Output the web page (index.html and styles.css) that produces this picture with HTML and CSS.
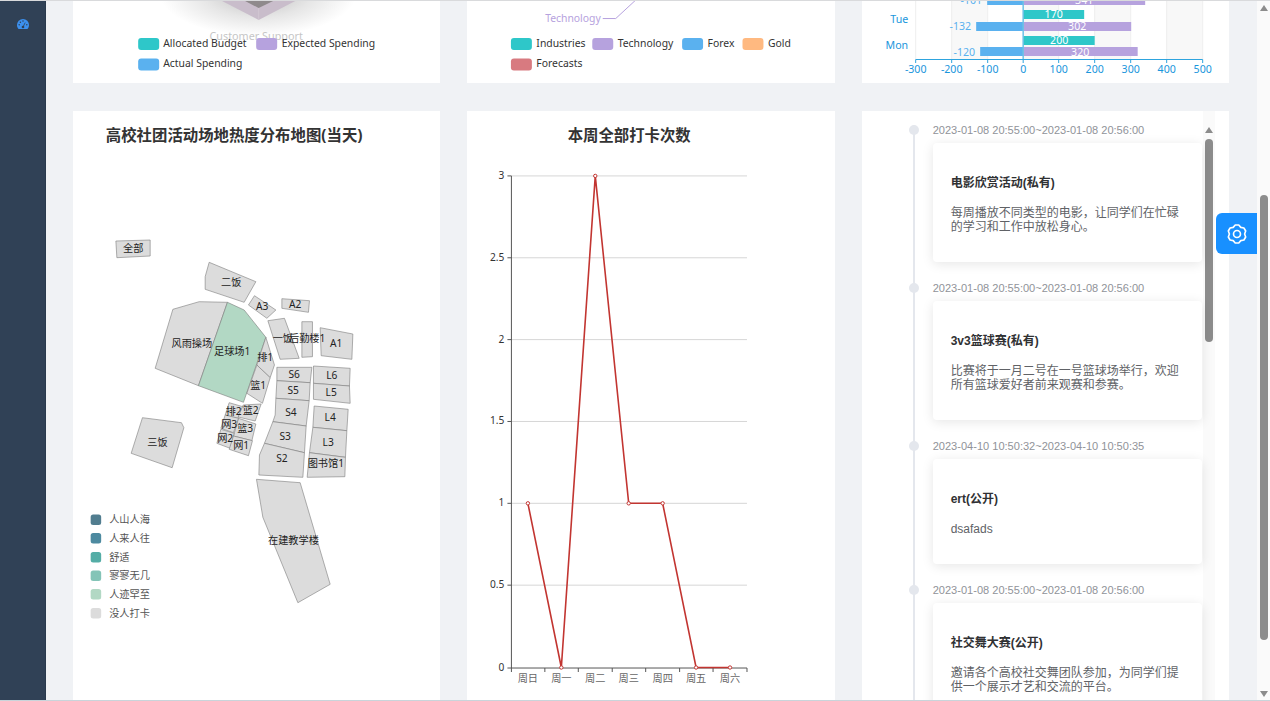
FILE: index.html
```html
<!DOCTYPE html>
<html lang="zh-CN">
<head>
    <meta charset="UTF-8">
    <title>高校社团活动</title>
    <link rel="stylesheet" href="styles.css">
</head>
<body>

<aside class="sidebar">
    <svg class="sidebar-icon" viewBox="0 0 12 10" width="12" height="10">
        <path class="gauge-body" d="M1.6 10C.6 9 0 7.6 0 6a6 6 0 0 1 12 0c0 1.6-.6 3-1.6 4z"/>
        <circle class="gauge-mark" cx="2.2" cy="5.8" r=".75"/>
        <circle class="gauge-mark" cx="3.4" cy="3.2" r=".75"/>
        <circle class="gauge-mark" cx="6" cy="2" r=".75"/>
        <circle class="gauge-mark" cx="9.8" cy="5.8" r=".75"/>
        <path class="gauge-needle" d="M6 8L8.2 3.6"/>
        <circle class="gauge-mark" cx="6" cy="8" r="1.3"/>
    </svg>
</aside>

<main class="content">
    <div class="dash-grid">

        <section class="card">
            <svg class="chart" viewBox="73 1 367 82">
                <defs>
                    <radialGradient id="funnelShade">
                        <stop offset="0" stop-color="#bdbdbd"/>
                        <stop offset=".55" stop-color="#e6e6e6"/>
                        <stop offset="1" stop-color="#fff"/>
                    </radialGradient>
                </defs>
                <ellipse cx="258" cy="-6" rx="98" ry="42" fill="url(#funnelShade)"/>
                <polygon points="220,0 258.5,20 297,0" fill="#c9bdcb"/>
                <polygon points="243,0 258.5,8 275,0" fill="#8f8a8c"/>
                <path class="funnel-edge" d="M258.5 8V20"/>
                <text class="funnel-label" x="256" y="35.500" text-anchor="middle">Customer Support</text>

                <rect class="swatch teal" x="138" y="38" width="21" height="12" rx="3"/>
                <text class="legend-text" x="163" y="43">Allocated Budget</text>
                <rect class="swatch purple" x="256" y="38" width="21" height="12" rx="3"/>
                <text class="legend-text" x="281.5" y="43">Expected Spending</text>
                <rect class="swatch blue" x="138" y="58.5" width="21" height="12" rx="3"/>
                <text class="legend-text" x="163" y="63">Actual Spending</text>
            </svg>
        </section>

        <section class="card">
            <svg class="chart" viewBox="467 1 368 82">
                <text class="pie-label" x="601" y="17.500" text-anchor="end">Technology</text>
                <path class="pie-line" d="M603 18.500H616L636 0"/>

                <rect class="swatch teal" x="511" y="38" width="21" height="12" rx="3"/>
                <text class="legend-text" x="536.500" y="43">Industries</text>
                <rect class="swatch purple" x="592.500" y="38" width="21" height="12" rx="3"/>
                <text class="legend-text" x="618" y="43">Technology</text>
                <rect class="swatch blue" x="682.500" y="38" width="21" height="12" rx="3"/>
                <text class="legend-text" x="708" y="43">Forex</text>
                <rect class="swatch orange" x="743" y="38" width="21" height="12" rx="3"/>
                <text class="legend-text" x="768.500" y="43">Gold</text>
                <rect class="swatch red" x="511" y="58.500" width="21" height="12" rx="3"/>
                <text class="legend-text" x="536.500" y="63">Forecasts</text>
            </svg>
        </section>

        <section class="card">
            <svg class="chart" viewBox="862 1 367 82">
                <rect class="stripe" x="951" y="0" width="36" height="59"/>
                <rect class="stripe" x="1023" y="0" width="36" height="59"/>
                <rect class="stripe" x="1094" y="0" width="36" height="59"/>
                <rect class="stripe" x="1166" y="0" width="36" height="59"/>
                <path class="grid-line" d="M915.500 0V59M951.500 0V59M987.500 0V59M1058.500 0V59M1094.500 0V59M1130.500 0V59M1166.500 0V59M1202.500 0V59"/>

                <rect class="swatch blue" x="987" y="-4" width="36" height="9"/>
                <rect class="swatch purple" x="1023" y="-4" width="122" height="9"/>
                <rect class="swatch teal" x="1023" y="10" width="61" height="9"/>
                <rect class="swatch blue" x="976" y="22" width="47" height="9"/>
                <rect class="swatch purple" x="1023" y="22" width="108" height="9"/>
                <rect class="swatch teal" x="1023" y="36" width="71.500" height="9"/>
                <rect class="swatch blue" x="980" y="47" width="43" height="9"/>
                <rect class="swatch purple" x="1023" y="47" width="114.500" height="9"/>

                <path class="zero-line" d="M1023 0V59"/>
                <path class="value-axis" d="M915.500 63V59.500H1202.500V63M951.500 59V63M987.500 59V63M1023 59V63M1058.500 59V63M1094.500 59V63M1130.500 59V63M1166.500 59V63"/>

                <text class="bar-label neg" x="982" y="0" text-anchor="end">-101</text>
                <text class="bar-label" x="1084" y="0" text-anchor="middle">341</text>
                <text class="bar-label" x="1053.500" y="14" text-anchor="middle">170</text>
                <text class="bar-label neg" x="971" y="26" text-anchor="end">-132</text>
                <text class="bar-label" x="1077" y="26" text-anchor="middle">302</text>
                <text class="bar-label" x="1059" y="40" text-anchor="middle">200</text>
                <text class="bar-label neg" x="975" y="51.500" text-anchor="end">-120</text>
                <text class="bar-label" x="1080" y="51.500" text-anchor="middle">320</text>

                <text class="axis-blue" x="908" y="19" text-anchor="end">Tue</text>
                <text class="axis-blue" x="908" y="45" text-anchor="end">Mon</text>
                <text class="axis-blue" x="915.500" y="69" text-anchor="middle">-300</text>
                <text class="axis-blue" x="951.500" y="69" text-anchor="middle">-200</text>
                <text class="axis-blue" x="987.500" y="69" text-anchor="middle">-100</text>
                <text class="axis-blue" x="1023" y="69" text-anchor="middle">0</text>
                <text class="axis-blue" x="1058.500" y="69" text-anchor="middle">100</text>
                <text class="axis-blue" x="1094.500" y="69" text-anchor="middle">200</text>
                <text class="axis-blue" x="1130.500" y="69" text-anchor="middle">300</text>
                <text class="axis-blue" x="1166.500" y="69" text-anchor="middle">400</text>
                <text class="axis-blue" x="1202.500" y="69" text-anchor="middle">500</text>
            </svg>
        </section>

        <section class="card">
            <svg class="chart" viewBox="73 111 367 589">
                <text class="chart-title" x="234" y="135" text-anchor="middle">高校社团活动场地热度分布地图(当天)</text>

                <polygon class="area" points="115.700,241 150,240 150,256 116.700,257.700"/>
                <polygon class="area" points="209,262.300 255.700,281.700 244,302.300 205,289.300 205,276.700"/>
                <polygon class="area" points="254.300,295.700 275.700,310 266.700,318.300 248.300,305"/>
                <polygon class="area" points="281.700,298.700 309.300,300.700 308.300,312.300 281.700,308.300"/>
                <polygon class="area" points="172.700,309.300 199,301.700 227.300,302.300 198.300,385.700 155,368.300"/>
                <polygon class="area area-low" points="227.300,302.300 244,310 265.700,337.300 243.300,402.300 198.300,385.700"/>
                <polygon class="area" points="265.700,337.300 274.300,365 270,377.700 256.700,365"/>
                <polygon class="area" points="256.700,365 270,377.700 262.300,403.300 246.700,393.300"/>
                <polygon class="area" points="267.700,320.700 284.300,318.300 299,358.300 280,359.300"/>
                <polygon class="area" points="301.700,321.700 312.300,321.700 312.300,356.700 301.700,357.300"/>
                <polygon class="area" points="320,327.700 352.700,334 351.700,359.300 321,355.700"/>
                <polygon class="area" points="276.700,367.300 311.700,367.300 310,382.700 276.700,380.700"/>
                <polygon class="area" points="276.700,380.700 310,382.700 309,400.700 275.700,398.300"/>
                <polygon class="area" points="313.300,366 350,368.300 349.300,386 313.300,383.300"/>
                <polygon class="area" points="313.300,383.300 349.300,386 350,403.300 313.300,399.300"/>
                <polygon class="area" points="275.700,398.300 309,400.700 306,426 272.700,421.700 275,415"/>
                <polygon class="area" points="272.700,421.700 306,426 304.300,452.700 264.300,443.300"/>
                <polygon class="area" points="264.300,443.300 304.300,452.700 302.700,477.300 258.700,475 259.300,455"/>
                <polygon class="area" points="314,406 348,409.300 346.700,430.700 312.700,427.300"/>
                <polygon class="area" points="312.700,427.300 346.700,430.700 345.300,457.300 309.300,452.700"/>
                <polygon class="area" points="309.300,452.700 345.300,457.300 344.700,476.700 307,477.300"/>
                <polygon class="area" points="256.300,479.300 300,482.700 330,584.300 297.700,602.700 262.700,517.300"/>
                <polygon class="area" points="142.300,417.700 181.300,422.700 183.700,427.700 172,467.700 131,453.300"/>
                <polygon class="area" points="229,402.700 242.700,406.700 237.700,418.300 225,415"/>
                <polygon class="area" points="243,405 261,404 255,421 238,417"/>
                <polygon class="area" points="238.300,418.300 255.700,424 251.700,440.700 233.300,436"/>
                <polygon class="area" points="225,415 238.300,418.300 233.300,432.700 220.700,428.300"/>
                <polygon class="area" points="220.700,429.300 234,433.300 230,448.300 216.700,443.300"/>
                <polygon class="area" points="233.300,436 252.300,440.700 248.300,455.700 229,449.300"/>

                <text class="area-name" x="133" y="247.500">全部</text>
                <text class="area-name" x="231" y="281.500">二饭</text>
                <text class="area-name" x="262" y="306">A3</text>
                <text class="area-name" x="295" y="304">A2</text>
                <text class="area-name" x="191.700" y="342.500">风雨操场</text>
                <text class="area-name" x="232" y="350.500">足球场1</text>
                <text class="area-name" x="265" y="356.500">排1</text>
                <text class="area-name" x="258" y="384.500">篮1</text>
                <text class="area-name" x="282.700" y="337.500">一饭</text>
                <text class="area-name" x="307" y="337.500">后勤楼1</text>
                <text class="area-name" x="336" y="342.700">A1</text>
                <text class="area-name" x="294" y="374">S6</text>
                <text class="area-name" x="293" y="390">S5</text>
                <text class="area-name" x="331.700" y="375">L6</text>
                <text class="area-name" x="331" y="392">L5</text>
                <text class="area-name" x="290.700" y="411.700">S4</text>
                <text class="area-name" x="285" y="436">S3</text>
                <text class="area-name" x="281.700" y="458.300">S2</text>
                <text class="area-name" x="330" y="417.300">L4</text>
                <text class="area-name" x="328" y="441.700">L3</text>
                <text class="area-name" x="325.700" y="463">图书馆1</text>
                <text class="area-name" x="293.300" y="540">在建教学楼</text>
                <text class="area-name" x="157.300" y="441.500">三饭</text>
                <text class="area-name" x="233.500" y="410.500">排2</text>
                <text class="area-name" x="250.500" y="410">篮2</text>
                <text class="area-name" x="229" y="423.500">网3</text>
                <text class="area-name" x="245" y="428">篮3</text>
                <text class="area-name" x="225" y="437.500">网2</text>
                <text class="area-name" x="241" y="444.500">网1</text>

                <rect class="heat-1" x="90.500" y="514.500" width="10.500" height="10.500" rx="2.500"/>
                <text class="heat-text" x="109" y="519">人山人海</text>
                <rect class="heat-2" x="90.500" y="533" width="10.500" height="10.500" rx="2.500"/>
                <text class="heat-text" x="109" y="537.500">人来人往</text>
                <rect class="heat-3" x="90.500" y="552" width="10.500" height="10.500" rx="2.500"/>
                <text class="heat-text" x="109" y="556.500">舒适</text>
                <rect class="heat-4" x="90.500" y="570.500" width="10.500" height="10.500" rx="2.500"/>
                <text class="heat-text" x="109" y="575">寥寥无几</text>
                <rect class="heat-5" x="90.500" y="589" width="10.500" height="10.500" rx="2.500"/>
                <text class="heat-text" x="109" y="593.500">人迹罕至</text>
                <rect class="heat-6" x="90.500" y="608" width="10.500" height="10.500" rx="2.500"/>
                <text class="heat-text" x="109" y="612.500">没人打卡</text>
            </svg>
        </section>

        <section class="card">
            <svg class="chart" viewBox="467 111 368 589">
                <text class="chart-title" x="629.500" y="135" text-anchor="middle">本周全部打卡次数</text>

                <path class="split-line" d="M511.500 175.500H747.500M511.500 257.500H747.500M511.500 339.500H747.500M511.500 421.500H747.500M511.500 503.500H747.500M511.500 585.500H747.500"/>
                <path class="axis-dark" d="M507.500 175.500H511.500V668.500H747.500V672.500M507.500 257.500H511.500M507.500 339.500H511.500M507.500 421.500H511.500M507.500 503.500H511.500M507.500 585.500H511.500M507.500 668.500H511.500M511.500 668.500V672.500M545 668.500V672.500M578.500 668.500V672.500M612.500 668.500V672.500M646 668.500V672.500M680 668.500V672.500M713.500 668.500V672.500"/>

                <polyline class="series-line" points="528,503.500 561.500,668 595.500,175.500 629,503.500 663,503.500 696.500,668 730.500,668"/>
                <circle class="series-dot" cx="528" cy="503.500" r="1.700"/>
                <circle class="series-dot" cx="561.500" cy="668" r="1.700"/>
                <circle class="series-dot" cx="595.500" cy="175.500" r="1.700"/>
                <circle class="series-dot" cx="629" cy="503.500" r="1.700"/>
                <circle class="series-dot" cx="663" cy="503.500" r="1.700"/>
                <circle class="series-dot" cx="696.500" cy="668" r="1.700"/>
                <circle class="series-dot" cx="730.500" cy="668" r="1.700"/>

                <text class="axis-num" x="504.500" y="174.500" text-anchor="end">3</text>
                <text class="axis-num" x="504.500" y="256.500" text-anchor="end">2.5</text>
                <text class="axis-num" x="504.500" y="338.500" text-anchor="end">2</text>
                <text class="axis-num" x="504.500" y="420.500" text-anchor="end">1.5</text>
                <text class="axis-num" x="504.500" y="502.500" text-anchor="end">1</text>
                <text class="axis-num" x="504.500" y="584.500" text-anchor="end">0.5</text>
                <text class="axis-num" x="504.500" y="667" text-anchor="end">0</text>

                <text class="axis-day" x="528" y="679" text-anchor="middle">周日</text>
                <text class="axis-day" x="561.500" y="679" text-anchor="middle">周一</text>
                <text class="axis-day" x="595.500" y="679" text-anchor="middle">周二</text>
                <text class="axis-day" x="629" y="679" text-anchor="middle">周三</text>
                <text class="axis-day" x="663" y="679" text-anchor="middle">周四</text>
                <text class="axis-day" x="696.500" y="679" text-anchor="middle">周五</text>
                <text class="axis-day" x="730.500" y="679" text-anchor="middle">周六</text>
            </svg>
        </section>

        <section class="card timeline-card">
            <ul class="timeline">
                <li class="timeline-item">
                    <div class="timeline-date">2023-01-08 20:55:00~2023-01-08 20:56:00</div>
                    <div class="timeline-box">
                        <h4>电影欣赏活动(私有)</h4>
                        <p>每周播放不同类型的电影，让同学们在忙碌的学习和工作中放松身心。</p>
                    </div>
                </li>
                <li class="timeline-item">
                    <div class="timeline-date">2023-01-08 20:55:00~2023-01-08 20:56:00</div>
                    <div class="timeline-box">
                        <h4>3v3篮球赛(私有)</h4>
                        <p>比赛将于一月二号在一号篮球场举行，欢迎所有篮球爱好者前来观赛和参赛。</p>
                    </div>
                </li>
                <li class="timeline-item">
                    <div class="timeline-date">2023-04-10 10:50:32~2023-04-10 10:50:35</div>
                    <div class="timeline-box">
                        <h4>ert(公开)</h4>
                        <p>dsafads</p>
                    </div>
                </li>
                <li class="timeline-item">
                    <div class="timeline-date">2023-01-08 20:55:00~2023-01-08 20:56:00</div>
                    <div class="timeline-box">
                        <h4>社交舞大赛(公开)</h4>
                        <p>邀请各个高校社交舞团队参加，为同学们提供一个展示才艺和交流的平台。</p>
                    </div>
                </li>
            </ul>
            <div class="scrollbar inner-scrollbar">
                <span class="arrow-up"></span>
                <span class="thumb"></span>
            </div>
        </section>

    </div>
</main>

<div class="scrollbar page-scrollbar">
    <span class="arrow-up"></span>
    <span class="thumb"></span>
    <span class="arrow-down"></span>
</div>

<button class="settings-button" aria-label="设置">
    <svg viewBox="0 0 24 24" width="22" height="22">
        <polygon points="10.09,2.18 13.91,2.18 16.15,4.81 19.55,5.44 21.46,8.74 20.3,12 21.46,15.26 19.55,18.56 16.15,19.19 13.91,21.82 10.09,21.82 7.85,19.19 4.45,18.56 2.54,15.26 3.7,12 2.54,8.74 4.45,5.44 7.85,4.81"/>
        <circle cx="12" cy="12" r="3.8"/>
    </svg>
</button>

</body>
</html>
```

FILE: styles.css
```css
:root {
    --page-bg: #f0f2f5;
    --sidebar-bg: #304156;
    --teal: #2ec7c9;
    --purple: #b6a2de;
    --blue: #5ab1ef;
    --axis-blue: #1a96dc;
    --cjk-sans: "Noto Sans", "Noto Sans CJK SC", sans-serif;
    --cjk-arial: "Liberation Sans", "Noto Sans CJK SC", sans-serif;
}

html, body {
    margin: 0;
    padding: 0;
    height: 100%;
    overflow: hidden;
}

body {
    display: flex;
    box-sizing: border-box;
    border-top: 1px solid #d9dadc;
    border-bottom: 1px solid #c9d4da;
    background-color: var(--page-bg);
    font-family: var(--cjk-arial);
}

.sidebar {
    flex: 0 0 46px;
    box-sizing: border-box;
    display: flex;
    flex-direction: column;
    align-items: center;
    padding-top: 18px;
    border-right: 1px solid #2a3a4d;
    background-color: var(--sidebar-bg);
}

.sidebar-icon {
    display: block;
}

.gauge-body {
    fill: #3c90ee;
}

.gauge-mark {
    fill: var(--sidebar-bg);
}

.gauge-needle {
    stroke: var(--sidebar-bg);
    stroke-width: .8;
}

.content {
    flex: 1;
    min-width: 0;
    padding: 0 28px 0 27px;
}

.dash-grid {
    display: grid;
    grid-template-columns: repeat(3, 1fr);
    grid-template-rows: 82px 589px;
    column-gap: 27px;
    row-gap: 28px;
    height: 100%;
}

.card {
    background-color: #fff;
    overflow: hidden;
    min-width: 0;
}

.chart {
    display: block;
    width: 100%;
    height: 100%;
}

.chart text {
    font-family: var(--cjk-sans);
    font-size: 10.2px;
    dominant-baseline: central;
}

.chart .chart-title {
    font-size: 15.4px;
    font-weight: 700;
    fill: #333;
}

.swatch.teal { fill: var(--teal); }
.swatch.purple { fill: var(--purple); }
.swatch.blue { fill: var(--blue); }
.swatch.orange { fill: #ffb980; }
.swatch.red { fill: #d87a80; }

.chart .legend-text {
    font-size: 10.4px;
    fill: #333;
}

.chart .funnel-label {
    font-size: 10.8px;
    fill: #c6c6c6;
}

.funnel-edge {
    stroke: #d8ced9;
    stroke-width: .6;
}

.chart .pie-label {
    font-size: 10.4px;
    fill: var(--purple);
}

.pie-line {
    fill: none;
    stroke: var(--purple);
    stroke-width: 1;
}

.stripe {
    fill: #f8f8f8;
}

.grid-line {
    fill: none;
    stroke: #eee;
    stroke-width: 1;
}

.zero-line {
    stroke: #6cc2e6;
    stroke-width: 1.5;
}

.value-axis {
    fill: none;
    stroke: #2ea4de;
    stroke-width: 1;
}

.chart .bar-label {
    font-size: 10.6px;
    fill: #fff;
}

.chart .bar-label.neg {
    fill: var(--blue);
}

.chart .axis-blue {
    font-size: 10.6px;
    fill: var(--axis-blue);
}

.area {
    fill: #dcdcdc;
    stroke: #7c7c7c;
    stroke-width: .6;
}

.area-low {
    fill: #b2d8c4;
}

.chart .area-name {
    fill: #222;
    text-anchor: middle;
}

.chart .heat-text {
    fill: #555;
}

.heat-1 { fill: #517d8f; }
.heat-2 { fill: #4d8aa0; }
.heat-3 { fill: #54ada6; }
.heat-4 { fill: #84c4b7; }
.heat-5 { fill: #b2d8c4; }
.heat-6 { fill: #dcdcdc; }

.split-line {
    fill: none;
    stroke: #d6d6d6;
    stroke-width: 1;
}

.axis-dark {
    fill: none;
    stroke: #555;
    stroke-width: 1;
}

.series-line {
    fill: none;
    stroke: #c23531;
    stroke-width: 1.6;
}

.series-dot {
    fill: #fff;
    stroke: #c23531;
    stroke-width: 1;
}

.chart .axis-num {
    fill: #333;
}

.chart .axis-day {
    fill: #666;
}

/* timeline card */
.timeline-card {
    display: flex;
    padding-right: 14px;
}

.timeline {
    flex: 1;
    min-width: 0;
    margin: 0;
    padding: 14px 1px 0 51px;
    list-style: none;
}

.timeline-item {
    position: relative;
    padding: 0 0 21px 18px;
    border-left: 2px solid #e4e7ed;
}

.timeline-item::before {
    content: "";
    position: absolute;
    left: -6px;
    top: 0;
    width: 10px;
    height: 10px;
    border-radius: 50%;
    background-color: #e4e7ed;
}

.timeline-date {
    margin-bottom: 8px;
    font-size: 11.06px;
    line-height: 10px;
    color: #909399;
}

.timeline-box {
    padding: 33px 18px 28px;
    border-radius: 4px;
    background-color: #fff;
    box-shadow: 0 2px 12px 0 rgba(0, 0, 0, .1);
}

.timeline-box h4 {
    margin: 0 0 16px;
    font-size: 12px;
    line-height: 14px;
    font-weight: 700;
    color: #303133;
}

.timeline-box p {
    margin: 0;
    font-size: 12px;
    line-height: 14px;
    color: #606266;
}

/* painted scrollbars */
.scrollbar {
    flex: none;
    display: flex;
    flex-direction: column;
    align-items: center;
    background-color: #fafafa;
}

.thumb {
    display: block;
    border-radius: 4px;
    background-color: #8c8c8c;
}

.arrow-up,
.arrow-down {
    display: block;
    width: 0;
    height: 0;
    border-left: 4px solid transparent;
    border-right: 4px solid transparent;
}

.arrow-up {
    border-bottom: 6px solid #8c8c8c;
}

.arrow-down {
    margin-top: auto;
    border-top: 6px solid #8c8c8c;
}

.inner-scrollbar {
    width: 12px;
    padding-top: 16px;
}

.inner-scrollbar .thumb {
    width: 8px;
    height: 203px;
    margin-top: 6px;
}

.page-scrollbar {
    width: 13px;
    padding: 4px 0 3px;
}

.page-scrollbar .thumb {
    width: 8px;
    height: 445px;
    margin-top: 184px;
}

.settings-button {
    position: absolute;
    left: 1216px;
    top: 213px;
    display: flex;
    align-items: center;
    justify-content: center;
    width: 41px;
    height: 41px;
    padding: 0;
    border: none;
    border-radius: 6px 0 0 6px;
    background-color: #1890ff;
    cursor: pointer;
}

.settings-button polygon,
.settings-button circle {
    fill: none;
    stroke: #fff;
    stroke-width: 1.8;
    stroke-linejoin: round;
}
```
